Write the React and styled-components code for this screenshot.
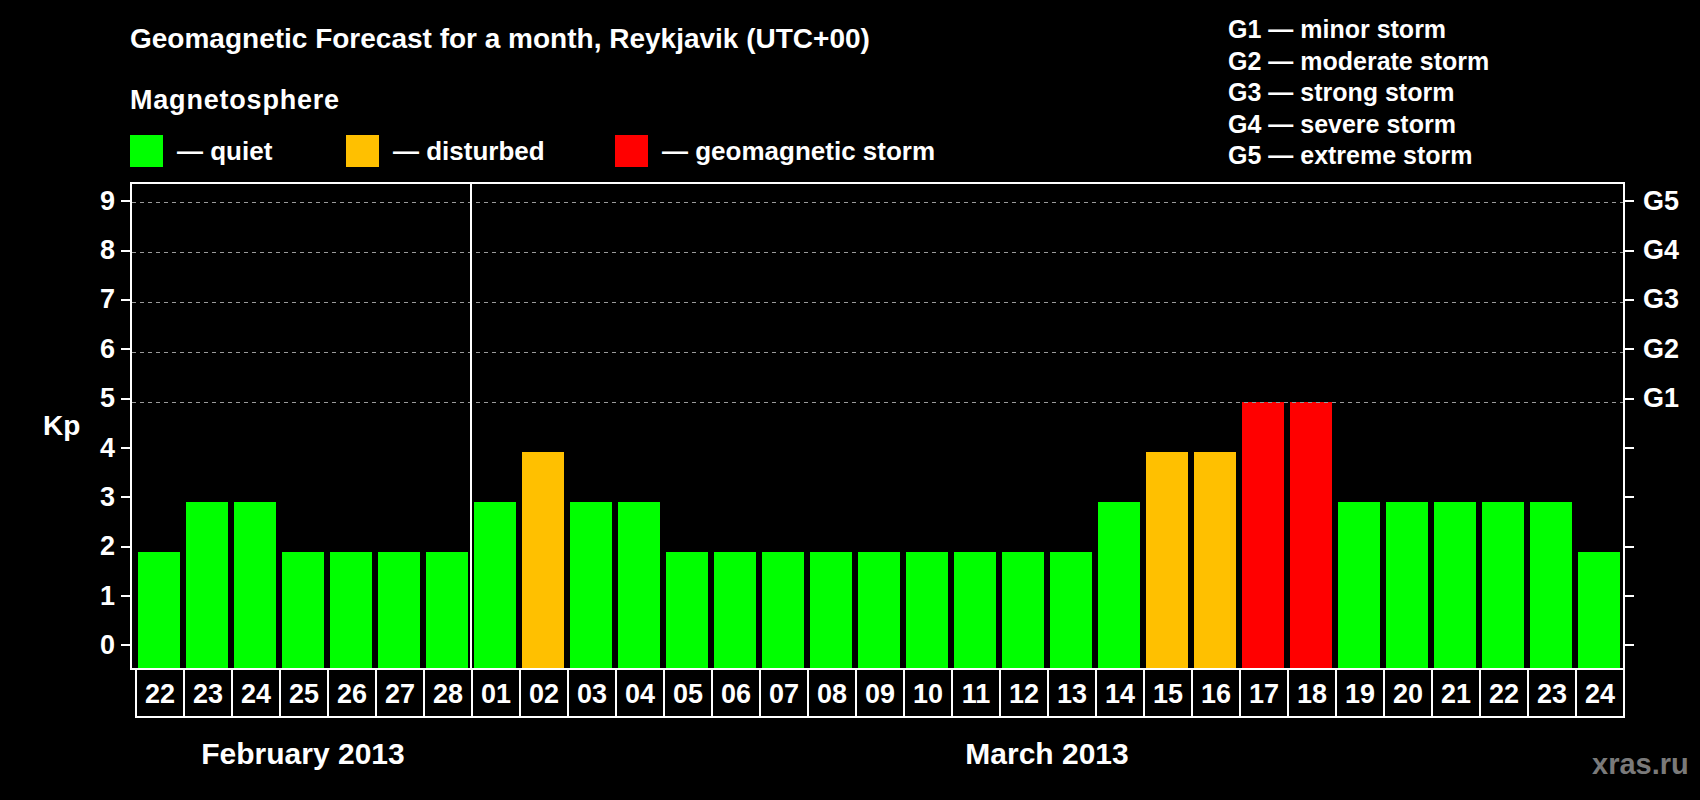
import React from "react";
import styled, { createGlobalStyle } from "styled-components";

const Global = createGlobalStyle`
  html, body { margin: 0; padding: 0; background: #000; }
  body { font-family: "Liberation Sans", Arial, sans-serif; font-weight: bold; color: #fff; }
`;

const COLORS = { q: "#00ff00", d: "#ffc000", s: "#ff0000" };
const DAYS = [
  ["22", 2], ["23", 3], ["24", 3], ["25", 2], ["26", 2], ["27", 2], ["28", 2],
  ["01", 3], ["02", 4], ["03", 3], ["04", 3], ["05", 2], ["06", 2], ["07", 2], ["08", 2],
  ["09", 2], ["10", 2], ["11", 2], ["12", 2], ["13", 2], ["14", 3], ["15", 4], ["16", 4],
  ["17", 5], ["18", 5], ["19", 3], ["20", 3], ["21", 3], ["22", 3], ["23", 3], ["24", 2],
];
const colorFor = (v) => (v >= 5 ? COLORS.s : v === 4 ? COLORS.d : COLORS.q);

const Page = styled.div`
  position: relative;
  width: 1700px;
  height: 800px;
  background: #000;
  overflow: hidden;
`;
const Header = styled.div`
  height: 182px;
  display: flex;
  justify-content: space-between;
`;
const HeaderLeft = styled.div`
  padding: 22px 0 0 130px;
`;
const Title = styled.div`
  font-size: 28px;
  line-height: 34px;
  white-space: nowrap;
`;
const Subtitle = styled.div`
  margin-top: 27px;
  font-size: 27px;
  line-height: 34px;
  letter-spacing: 0.8px;
`;
const LegendRow = styled.div`
  margin-top: 18px;
  display: flex;
`;
const LegendItem = styled.div`
  display: flex;
  align-items: center;
  gap: 14px;
  width: ${(p) => p.$w}px;
  font-size: 26px;
  white-space: nowrap;
`;
const Swatch = styled.div`
  width: 33px;
  height: 32px;
  background: ${(p) => p.$c};
`;
const GLegend = styled.div`
  width: 472px;
  padding-top: 14px;
  font-size: 25px;
  line-height: 31.5px;
  white-space: nowrap;
`;
const ChartRow = styled.div`
  display: flex;
  height: 488px;
`;
const LeftAxis = styled.div`
  width: 130px;
  display: flex;
`;
const KpLabel = styled.div`
  margin: 226px 0 0 43px;
  font-size: 28px;
  line-height: 36px;
  height: 36px;
`;
const TickColumn = styled.div`
  flex: 1;
  margin-top: -5.4px;
  display: flex;
  flex-direction: column;
`;
const TickRow = styled.div`
  height: 50px;
  display: flex;
  align-items: center;
  justify-content: ${(p) => (p.$right ? "flex-start" : "flex-end")};
  gap: ${(p) => (p.$right ? 9 : 6)}px;
  font-size: 27px;
`;
const Tick = styled.div`
  width: 9px;
  height: 2px;
  background: #fff;
`;
const Plot = styled.div`
  position: relative;
  box-sizing: border-box;
  width: 1495px;
  height: 488px;
  border: 2px solid #fff;
  display: flex;
  align-items: flex-end;
  padding-left: 3px;
`;
const Cell = styled.div`
  width: 48px;
  display: flex;
`;
const Bar = styled.div`
  width: 42px;
  margin-left: 3px;
  background: ${(p) => p.$c};
`;
const GridLine = styled.div`
  position: absolute;
  left: 0;
  right: 0;
  height: 1px;
  background: repeating-linear-gradient(to right, #9a9a9a 0 4px, transparent 4px 8px);
`;
const Divider = styled.div`
  position: absolute;
  top: 0;
  bottom: 0;
  left: 338px;
  width: 2px;
  background: #fff;
`;
const RightAxis = styled(TickColumn)`
  flex: none;
  width: 75px;
`;
const DayRow = styled.div`
  margin-left: 135px;
  display: flex;
`;
const DayCell = styled.div`
  box-sizing: border-box;
  width: ${(p) => (p.$last ? 50 : 48)}px;
  height: 48px;
  border-left: 2px solid #fff;
  border-bottom: 2px solid #fff;
  border-right: ${(p) => (p.$last ? "2px solid #fff" : "none")};
  display: flex;
  align-items: center;
  justify-content: center;
  font-size: 27px;
  padding-top: 2px;
`;
const MonthRow = styled.div`
  margin: 18px 0 0 135px;
  display: flex;
  font-size: 30px;
  line-height: 36px;
`;
const Month = styled.div`
  width: ${(p) => p.$w}px;
  text-align: center;
`;
const Watermark = styled.div`
  position: absolute;
  left: 1592px;
  top: 748px;
  font-size: 29px;
  color: #7a7a7a;
`;

export default function App() {
  const levels = [9, 8, 7, 6, 5, 4, 3, 2, 1, 0];
  return (
    <Page>
      <Global />
      <Header>
        <HeaderLeft>
          <Title>Geomagnetic Forecast for a month, Reykjavik (UTC+00)</Title>
          <Subtitle>Magnetosphere</Subtitle>
          <LegendRow>
            <LegendItem $w={216}><Swatch $c={COLORS.q} />— quiet</LegendItem>
            <LegendItem $w={269}><Swatch $c={COLORS.d} />— disturbed</LegendItem>
            <LegendItem $w={400}><Swatch $c={COLORS.s} />— geomagnetic storm</LegendItem>
          </LegendRow>
        </HeaderLeft>
        <GLegend>
          <div>G1 — minor storm</div>
          <div>G2 — moderate storm</div>
          <div>G3 — strong storm</div>
          <div>G4 — severe storm</div>
          <div>G5 — extreme storm</div>
        </GLegend>
      </Header>
      <ChartRow>
        <LeftAxis>
          <KpLabel>Kp</KpLabel>
          <TickColumn>
            {levels.map((k) => (
              <TickRow key={k}>{k}<Tick /></TickRow>
            ))}
          </TickColumn>
        </LeftAxis>
        <Plot>
          {[5, 6, 7, 8, 9].map((k) => (
            <GridLine key={k} style={{ top: 467.6 - 50 * k }} />
          ))}
          <Divider />
          {DAYS.map(([d, v], i) => (
            <Cell key={i}>
              <Bar $c={colorFor(v)} style={{ height: v * 50 + 16.4 }} />
            </Cell>
          ))}
        </Plot>
        <RightAxis>
          {levels.map((k) => (
            <TickRow key={k} $right>
              <Tick />
              {k >= 5 ? `G${k - 4}` : ""}
            </TickRow>
          ))}
        </RightAxis>
      </ChartRow>
      <DayRow>
        {DAYS.map(([d], i) => (
          <DayCell key={i} $last={i === DAYS.length - 1}>{d}</DayCell>
        ))}
      </DayRow>
      <MonthRow>
        <Month $w={336}>February 2013</Month>
        <Month $w={1152}>March 2013</Month>
      </MonthRow>
      <Watermark>xras.ru</Watermark>
    </Page>
  );
}
